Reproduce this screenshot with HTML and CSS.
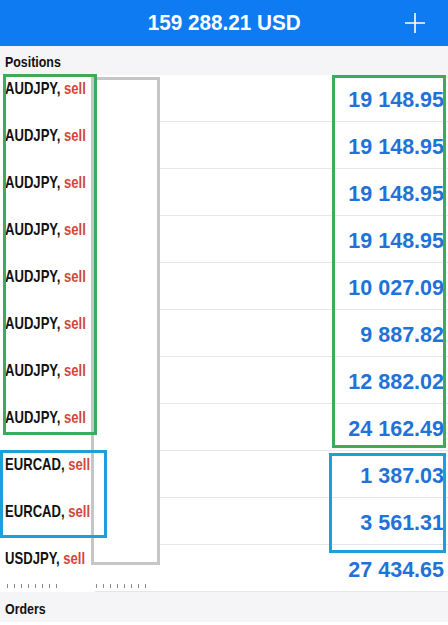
FILE: index.html
```html
<!DOCTYPE html>
<html lang="en">

<head>
    <meta charset="UTF-8" />
    <meta name="viewport" content="width=device-width, initial-scale=1.0" />
    <title>Trade</title>
    <link rel="stylesheet" href="styles.css">
</head>

<body>
    <header class="topbar">
        <h1 class="balance">159 288.21 USD</h1>
        <button class="add" aria-label="New order">
            <svg width="22" height="22" viewBox="0 0 22 22">
                <path d="M11 1V21M1 11H21" stroke="#fff" stroke-width="1.6" fill="none" />
            </svg>
        </button>
    </header>

    <div class="section"><span class="narrow">Positions</span></div>

    <div class="list">
        <div class="row">
            <div class="deal"><span class="narrow">AUDJPY, <span class="sell">sell</span></span></div>
            <div class="profit">19 148.95</div>
        </div>
        <div class="row">
            <div class="deal"><span class="narrow">AUDJPY, <span class="sell">sell</span></span></div>
            <div class="profit">19 148.95</div>
        </div>
        <div class="row">
            <div class="deal"><span class="narrow">AUDJPY, <span class="sell">sell</span></span></div>
            <div class="profit">19 148.95</div>
        </div>
        <div class="row">
            <div class="deal"><span class="narrow">AUDJPY, <span class="sell">sell</span></span></div>
            <div class="profit">19 148.95</div>
        </div>
        <div class="row">
            <div class="deal"><span class="narrow">AUDJPY, <span class="sell">sell</span></span></div>
            <div class="profit">10 027.09</div>
        </div>
        <div class="row">
            <div class="deal"><span class="narrow">AUDJPY, <span class="sell">sell</span></span></div>
            <div class="profit">9 887.82</div>
        </div>
        <div class="row">
            <div class="deal"><span class="narrow">AUDJPY, <span class="sell">sell</span></span></div>
            <div class="profit">12 882.02</div>
        </div>
        <div class="row">
            <div class="deal"><span class="narrow">AUDJPY, <span class="sell">sell</span></span></div>
            <div class="profit">24 162.49</div>
        </div>
        <div class="row">
            <div class="deal"><span class="narrow">EURCAD, <span class="sell">sell</span></span></div>
            <div class="profit">1 387.03</div>
        </div>
        <div class="row">
            <div class="deal"><span class="narrow">EURCAD, <span class="sell">sell</span></span></div>
            <div class="profit">3 561.31</div>
        </div>
        <div class="row">
            <div class="deal">
                <span class="narrow">USDJPY, <span class="sell">sell</span></span>
                <!-- leftover bottom edge of the price line -->
                <div class="ticks"><i></i><i></i></div>
            </div>
            <div class="profit">27 434.65</div>
        </div>
    </div>

    <div class="section"><span class="narrow">Orders</span></div>

    <!-- highlight frames drawn over the list -->
    <div class="mark mark-grey"></div>
    <div class="mark mark-green-left"></div>
    <div class="mark mark-green-right"></div>
    <div class="mark mark-blue-left"></div>
    <div class="mark mark-blue-right"></div>
</body>

</html>
```

FILE: styles.css
```css
body {
    margin: 0;
    position: relative;
    height: 625px;
    overflow: hidden;
    background-color: #fff;
    font-family: 'Liberation Sans', Arial, sans-serif;
    color: #111;
}

/* condensed look for labels */
.narrow {
    display: inline-block;
    transform: scaleX(0.8);
    transform-origin: left center;
    white-space: nowrap;
}

.topbar {
    height: 46px;
    background-color: #0f7bf2;
    display: flex;
    align-items: center;
    justify-content: center;
    position: relative;
}

.balance {
    margin: 0;
    color: #fff;
    font-size: 22.5px;
    font-weight: bold;
    line-height: 46px;
    transform: scaleX(0.92);
}

.add {
    position: absolute;
    right: 22px;
    top: 12px;
    padding: 0;
    border: none;
    background: none;
    display: flex;
}

.section {
    background-color: #f5f5f7;
    font-weight: bold;
    font-size: 15.5px;
    line-height: 27px;
    padding: 2px 5px 0;
}

.section:last-child,
.list + .section {
    padding-top: 3px;
}

.row {
    height: 47px;
    box-sizing: border-box;
    display: flex;
    justify-content: space-between;
    padding: 0 4px 0 5px;
    /* separator line, inset from the left */
    background: linear-gradient(#e6e6e6, #e6e6e6) no-repeat right bottom / calc(100% - 95px) 1px;
}

.deal {
    font-size: 17px;
    font-weight: bold;
    line-height: 18px;
    padding-top: 5px;
}

.deal .narrow {
    transform: scaleX(0.77);
}

.sell {
    color: #d2473c;
}

.ticks {
    display: flex;
    gap: 33px;
    margin-top: 16px;
    padding-left: 2px;
}

.ticks i {
    display: block;
    width: 56px;
    height: 4px;
    background: repeating-linear-gradient(90deg, #8c8c8c 0 1px, transparent 1px 7px);
}

.profit {
    align-self: flex-end;
    font-size: 21.5px;
    font-weight: bold;
    line-height: 26px;
    padding-bottom: 9px;
    color: #1f72d8;
}

.mark {
    position: absolute;
    box-sizing: border-box;
    border: 3px solid;
}

.mark-grey {
    left: 91px;
    top: 77px;
    width: 69px;
    height: 488px;
    border-color: #c6c6c6;
    background-color: #fff;
}

.mark-green-left {
    left: 3px;
    top: 74px;
    width: 94px;
    height: 361px;
    border-color: #3cab5a;
}

.mark-green-right {
    left: 332px;
    top: 75px;
    width: 114px;
    height: 373px;
    border-color: #3cab5a;
}

.mark-blue-left {
    left: 0;
    top: 450px;
    width: 107px;
    height: 88px;
    border-color: #1d9fdc;
}

.mark-blue-right {
    left: 329px;
    top: 453px;
    width: 117px;
    height: 100px;
    border-color: #1d9fdc;
}
```
